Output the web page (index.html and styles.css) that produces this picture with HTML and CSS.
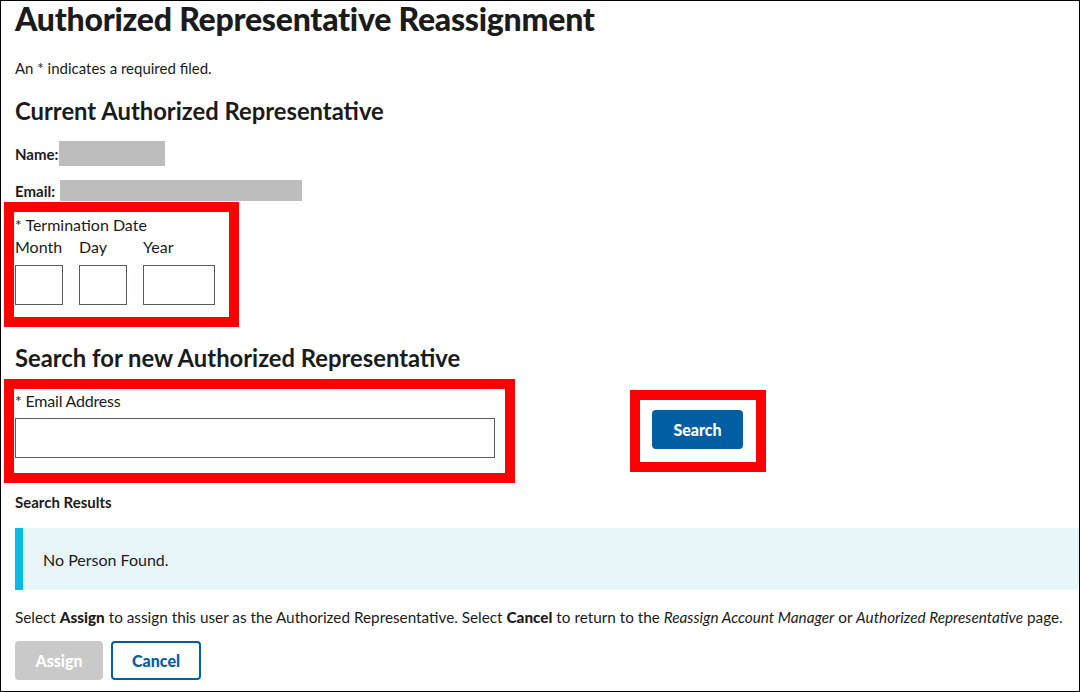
FILE: index.html
```html
<!DOCTYPE html>
<html lang="en">
<head>
<meta charset="utf-8">
<title>Authorized Representative Reassignment</title>
<link rel="stylesheet" href="styles.css">
</head>
<body>
<div class="page">
  <h1 class="title">Authorized Representative Reassignment</h1>
  <p class="note">An * indicates a required filed.</p>
  <h2 class="subhead subhead-current">Current Authorized Representative</h2>
  <div class="info-row info-name"><span class="info-label">Name:</span><span class="redact redact-name"></span></div>
  <div class="info-row info-email"><span class="info-label">Email:</span><span class="redact redact-email"></span></div>

  <div class="anno anno-date">
    <div class="field-label">* Termination Date</div>
    <div class="date-grid">
      <span class="date-label">Month</span>
      <span class="date-label">Day</span>
      <span class="date-label">Year</span>
      <input class="text-input" type="text" aria-label="Month">
      <input class="text-input" type="text" aria-label="Day">
      <input class="text-input" type="text" aria-label="Year">
    </div>
  </div>

  <h2 class="subhead subhead-search">Search for new Authorized Representative</h2>
  <div class="search-row">
    <div class="anno anno-email">
      <div class="field-label">* Email Address</div>
      <input class="text-input email-input" type="text" aria-label="Email Address">
    </div>
    <div class="anno anno-btn">
      <button class="btn btn-primary" type="button">Search</button>
    </div>
  </div>

  <div class="results-label">Search Results</div>
  <div class="alert">No Person Found.</div>
  <p class="instructions">Select <b>Assign</b> to assign this user as the Authorized Representative. Select <b>Cancel</b> to return to the <i>Reassign Account Manager</i> or <i>Authorized Representative</i> page.</p>
  <div class="actions">
    <button class="btn btn-disabled" type="button">Assign</button>
    <button class="btn btn-outline" type="button">Cancel</button>
  </div>
</div>
</body>
</html>
```

FILE: styles.css
```css
* { box-sizing: border-box; }
html, body { margin: 0; padding: 0; background: #fff; }
body {
  font-family: "Source Sans Pro", Lato, "Liberation Sans", sans-serif;
  color: #1b1b1b;
  font-size: 16px;
}
.page {
  width: 1080px;
  height: 692px;
  border: 1px solid #000;
  padding-left: 14px;
  overflow: hidden;
}
.title {
  margin: 0;
  font-size: 32px;
  line-height: 36px;
  font-weight: 900;
  letter-spacing: -0.25px;
}
.note {
  margin: 21px 0 0;
  font-size: 15px;
  line-height: 20px;
}
.subhead {
  margin: 0;
  font-size: 23.8px;
  line-height: 30px;
  font-weight: 700;
}
.subhead-current { margin-top: 18px; }
.info-row {
  display: flex;
  align-items: center;
  font-size: 15px;
  font-weight: 700;
}
.info-name { margin-top: 15px; height: 25px; }
.info-email { margin-top: 14px; height: 21px; }
.redact { display: block; background: #bdbdbd; }
.redact-name { width: 106px; height: 25px; margin-left: 1px; }
.redact-email { width: 242px; height: 21px; margin-left: 5px; }

.anno {
  border: 10px solid #ff0000;
}
.anno-date {
  margin: 1px 0 0 -11px;
  width: 235px;
  padding: 3px 0 12px 1px;
}
.field-label {
  font-size: 16px;
  line-height: 20px;
}
.date-grid {
  display: grid;
  grid-template-columns: 48px 48px 72px;
  column-gap: 16px;
  margin-top: 2px;
}
.date-label {
  font-size: 16px;
  line-height: 20px;
  margin-bottom: 8px;
}
.text-input {
  display: block;
  height: 40px;
  width: 100%;
  margin: 0;
  border: 1px solid #565c65;
  border-radius: 0;
  background: #fff;
  font: inherit;
}
.subhead-search { margin-top: 16px; }
.search-row {
  display: flex;
  align-items: flex-start;
  margin-top: 6px;
  margin-left: -11px;
}
.anno-email {
  width: 511px;
  padding: 2px 0 15px 1px;
}
.anno-email .field-label { letter-spacing: -0.2px; }
.email-input { width: 480px; margin-top: 7px; }
.anno-btn {
  margin: 11px 0 0 115px;
  width: 136px;
  padding: 10px 0 13px 12px;
}
.btn {
  display: block;
  height: 39px;
  margin: 0;
  padding: 0;
  border: 0;
  border-radius: 4px;
  font-family: inherit;
  font-size: 16px;
  font-weight: 900;
  cursor: pointer;
}
.btn-primary {
  width: 91px;
  background: #005ea2;
  color: #fff;
}
.results-label {
  margin-top: 9px;
  font-size: 15px;
  line-height: 20px;
  font-weight: 700;
}
.alert {
  margin-top: 16px;
  height: 62px;
  border-left: 8px solid #00bde3;
  background: #e7f6f8;
  padding-left: 20px;
  display: flex;
  align-items: center;
  font-size: 16px;
}
.instructions {
  margin: 17px 0 0;
  font-size: 15.3px;
  line-height: 20px;
  white-space: nowrap;
}
.instructions b { font-weight: 900; }
.actions {
  display: flex;
  gap: 8px;
  margin-top: 14px;
}
.btn-disabled {
  width: 88px;
  background: #c9c9c9;
  color: #fff;
}
.btn-outline {
  width: 90px;
  background: #fff;
  color: #005ea2;
  box-shadow: inset 0 0 0 2px #005ea2;
}
```
